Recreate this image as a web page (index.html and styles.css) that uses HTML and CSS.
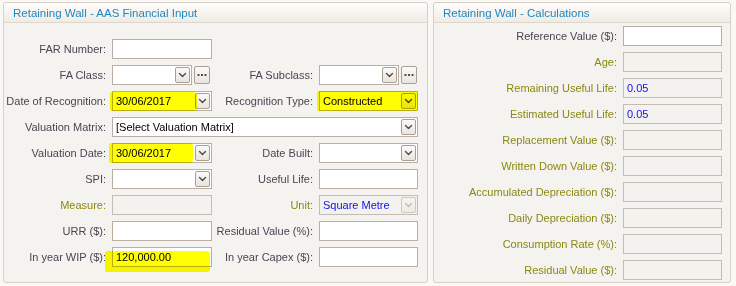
FILE: index.html
```html
<!DOCTYPE html>
<html lang="en">
<head>
  <meta charset="UTF-8" />
  <title>Retaining Wall</title>
  <link rel="stylesheet" href="styles.css">
</head>
<body>
  <div class="page">
    <!-- Financial input -->
    <section class="panel panel-input">
      <div class="panel-head">Retaining Wall - AAS Financial Input</div>
      <div class="form-grid">
        <span class="lbl">FAR Number:</span>
        <div class="field"><span class="box"></span></div>
        <span></span><span></span>

        <span class="lbl">FA Class:</span>
        <div class="field">
          <span class="box combo narrow"><span class="val"></span><span class="drop"></span></span>
          <span class="dots"></span>
        </div>
        <span class="lbl">FA Subclass:</span>
        <div class="field">
          <span class="box combo narrow"><span class="val"></span><span class="drop"></span></span>
          <span class="dots"></span>
        </div>

        <span class="lbl">Date of Recognition:</span>
        <div class="field">
          <span class="box combo"><span class="val">30/06/2017</span><span class="drop"></span></span>
          <span class="marker mark-dor"></span>
        </div>
        <span class="lbl">Recognition Type:</span>
        <div class="field">
          <span class="box combo"><span class="val">Constructed</span><span class="drop"></span></span>
          <span class="marker mark-type"></span>
        </div>

        <span class="lbl">Valuation Matrix:</span>
        <div class="field wide">
          <span class="box combo"><span class="val">[Select Valuation Matrix]</span><span class="drop"></span></span>
        </div>

        <span class="lbl">Valuation Date:</span>
        <div class="field">
          <span class="box combo"><span class="val">30/06/2017</span><span class="drop"></span></span>
          <span class="marker mark-vd"></span>
        </div>
        <span class="lbl">Date Built:</span>
        <div class="field">
          <span class="box combo"><span class="val"></span><span class="drop"></span></span>
        </div>

        <span class="lbl">SPI:</span>
        <div class="field">
          <span class="box combo"><span class="val"></span><span class="drop"></span></span>
        </div>
        <span class="lbl">Useful Life:</span>
        <div class="field"><span class="box"></span></div>

        <span class="lbl calc">Measure:</span>
        <div class="field"><span class="box off"></span></div>
        <span class="lbl calc">Unit:</span>
        <div class="field">
          <span class="box combo off"><span class="val blue">Square Metre</span><span class="drop dim"></span></span>
        </div>

        <span class="lbl">URR ($):</span>
        <div class="field"><span class="box"></span></div>
        <span class="lbl">Residual Value (%):</span>
        <div class="field"><span class="box"></span></div>

        <span class="lbl">In year WIP ($):</span>
        <div class="field">
          <span class="box"><span class="val">120,000.00</span></span>
          <span class="marker mark-wip"></span>
        </div>
        <span class="lbl">In year Capex ($):</span>
        <div class="field"><span class="box"></span></div>
      </div>
    </section>

    <!-- Calculations -->
    <section class="panel panel-calc">
      <div class="panel-head">Retaining Wall - Calculations</div>
      <div class="calc-grid">
        <span class="lbl">Reference Value ($):</span>
        <div class="field"><span class="box"></span></div>
        <span class="lbl calc">Age:</span>
        <div class="field"><span class="box off"></span></div>
        <span class="lbl calc">Remaining Useful Life:</span>
        <div class="field"><span class="box off"><span class="val blue">0.05</span></span></div>
        <span class="lbl calc">Estimated Useful Life:</span>
        <div class="field"><span class="box off"><span class="val blue">0.05</span></span></div>
        <span class="lbl calc">Replacement Value ($):</span>
        <div class="field"><span class="box off"></span></div>
        <span class="lbl calc">Written Down Value ($):</span>
        <div class="field"><span class="box off"></span></div>
        <span class="lbl calc">Accumulated Depreciation ($):</span>
        <div class="field"><span class="box off"></span></div>
        <span class="lbl calc">Daily Depreciation ($):</span>
        <div class="field"><span class="box off"></span></div>
        <span class="lbl calc">Consumption Rate (%):</span>
        <div class="field"><span class="box off"></span></div>
        <span class="lbl calc">Residual Value ($):</span>
        <div class="field"><span class="box off"></span></div>
      </div>
    </section>
  </div>
</body>
</html>
```

FILE: styles.css
```css
html, body {
  margin: 0;
  padding: 0;
  background: #f9f8f5;
  font-family: "Liberation Sans", Arial, sans-serif;
  font-size: 11px;
  color: #4a4454;
}
.page {
  display: flex;
  gap: 5px;
  padding: 2px 0 0 3px;
  height: 281px;
}
.panel {
  display: flex;
  flex-direction: column;
  background: #f5f3ef;
  border: 1px solid #d6d0c6;
  border-radius: 3px;
  box-sizing: border-box;
  height: 281px;
}
.panel-input {
  width: 425px;
}
.panel-calc {
  width: 298px;
}
.panel-head {
  height: 19px;
  line-height: 20px;
  padding-left: 9px;
  font-size: 11.5px;
  color: #2387c0;
  background: linear-gradient(#fefdfc, #efebe4);
  border-bottom: 1px solid #ddd7cd;
  border-radius: 3px 3px 0 0;
}

/* Form grids */
.form-grid {
  display: grid;
  grid-template-columns: 108px 100px 107px 99px;
  grid-auto-rows: 20px;
  row-gap: 6px;
  padding-top: 16px;
}
.calc-grid {
  display: grid;
  grid-template-columns: 189px 99px;
  grid-auto-rows: 20px;
  row-gap: 6px;
  padding-top: 3px;
}
.lbl {
  text-align: right;
  padding-right: 6px;
  line-height: 20px;
  white-space: nowrap;
}
.lbl.calc {
  color: #8a8810;
}
.field {
  display: flex;
  gap: 2px;
  position: relative;
}
.field.wide {
  grid-column: 2 / 5;
}
.box {
  flex: 1;
  display: flex;
  align-items: center;
  box-sizing: border-box;
  height: 20px;
  background: #ffffff;
  border: 1px solid #b9afa5;
}
.box.off {
  background: #f4f2ee;
  border-color: #c4bcb2;
}
.box.narrow {
  flex: none;
  width: 80px;
}
.val {
  flex: 1;
  padding-left: 3px;
  color: #000000;
  white-space: nowrap;
  overflow: hidden;
}
.val.blue {
  color: #1010ee;
}

/* Combo buttons */
.drop, .dots {
  box-sizing: border-box;
  border: 1px solid #a99f94;
  border-radius: 2px;
  background-position: center;
  background-repeat: no-repeat;
}
.drop {
  width: 15px;
  height: 16px;
  margin-right: 1px;
  background-image: url("data:image/svg+xml;utf8,<svg xmlns='http://www.w3.org/2000/svg' width='13' height='14'><path d='M3.5 5.5 L6.5 8.5 L9.5 5.5' fill='none' stroke='%23504a48' stroke-width='1.4' stroke-linecap='round' stroke-linejoin='round'/></svg>"), linear-gradient(#fbfaf8, #e9e4dc);
}
.drop.dim {
  border-color: #cfc8be;
  background-image: url("data:image/svg+xml;utf8,<svg xmlns='http://www.w3.org/2000/svg' width='13' height='14'><path d='M3.5 5.5 L6.5 8.5 L9.5 5.5' fill='none' stroke='%23c0bab4' stroke-width='1.4' stroke-linecap='round' stroke-linejoin='round'/></svg>"), linear-gradient(#f6f4f0, #eeebe6);
}
.dots {
  width: 16px;
  height: 18px;
  margin-top: 1px;
  background-image: url("data:image/svg+xml;utf8,<svg xmlns='http://www.w3.org/2000/svg' width='14' height='16'><g fill='%23504a48'><rect x='2.5' y='7' width='2' height='2'/><rect x='6' y='7' width='2' height='2'/><rect x='9.5' y='7' width='2' height='2'/></g></svg>"), linear-gradient(#fbfaf8, #e9e4dc);
}

/* Highlighter marks drawn over fields */
.marker {
  position: absolute;
  background: #ffff00;
  mix-blend-mode: multiply;
  border-radius: 2px 4px 3px 2px;
  pointer-events: none;
}
.mark-dor {
  left: -2px;
  top: 1px;
  width: 87px;
  height: 19px;
}
.mark-type {
  left: -2px;
  top: 0;
  width: 101px;
  height: 20px;
}
.mark-vd {
  left: -3px;
  top: 0;
  width: 84px;
  height: 20px;
}
.mark-wip {
  left: -7px;
  top: 4px;
  width: 105px;
  height: 21px;
}
```
